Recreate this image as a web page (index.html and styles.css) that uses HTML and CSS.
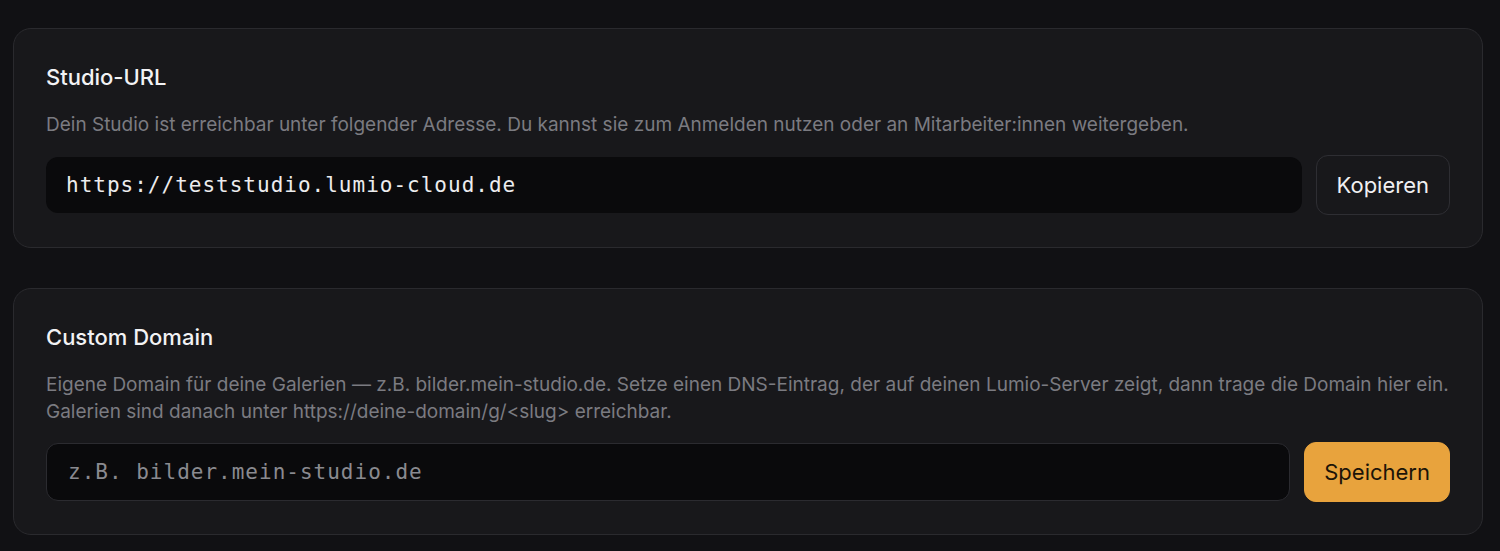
FILE: index.html
```html
<!DOCTYPE html>
<html lang="de">
<head>
<meta charset="utf-8">
<title>Studio-Einstellungen</title>
<link rel="stylesheet" href="styles.css">
</head>
<body>
<main class="page">
  <section class="card">
    <h2 class="card-title">Studio-URL</h2>
    <p class="card-desc">Dein Studio ist erreichbar unter folgender Adresse. Du kannst sie zum Anmelden nutzen oder an Mitarbeiter:innen weitergeben.</p>
    <div class="row">
      <div class="url-box">https://teststudio.lumio-cloud.de</div>
      <button class="btn btn-outline">Kopieren</button>
    </div>
  </section>
  <section class="card">
    <h2 class="card-title">Custom Domain</h2>
    <p class="card-desc">Eigene Domain für deine Galerien — z.B. bilder.mein-studio.de. Setze einen DNS-Eintrag, der auf deinen Lumio-Server zeigt, dann trage die Domain hier ein. Galerien sind danach unter https://deine-domain/g/&lt;slug&gt; erreichbar.</p>
    <div class="row">
      <input class="text-input" type="text" placeholder="z.B. bilder.mein-studio.de">
      <button class="btn btn-primary">Speichern</button>
    </div>
  </section>
</main>
</body>
</html>
```

FILE: styles.css
```css
* { box-sizing: border-box; }
html, body { margin: 0; padding: 0; }
body {
  background: #111114;
  font-family: Inter, "Noto Sans", sans-serif;
  color: #f0f0f2;
}
.page {
  display: flex;
  flex-direction: column;
  gap: 40px;
  padding: 28px 17px 0 13px;
}
.card {
  background: #18181b;
  border: 1px solid #2a2a2e;
  border-radius: 18px;
  padding: 32px;
}
.card-title {
  margin: 0 0 18px;
  font-size: 22px;
  font-weight: 500;
  line-height: 32px;
  color: #f2f2f4;
}
.card-desc {
  margin: 0 0 17px;
  font-size: 19px;
  line-height: 27px;
  color: #7b7b81;
}
.row {
  display: flex;
  align-items: center;
  gap: 14px;
}
.url-box {
  flex: 1;
  height: 56px;
  display: flex;
  align-items: center;
  padding: 0 20px;
  background: #0a0a0c;
  border-radius: 12px;
  font-family: "DejaVu Sans Mono", monospace;
  font-size: 21px;
  letter-spacing: 1px;
  color: #ececee;
}
.text-input {
  flex: 1;
  height: 58px;
  padding: 0 21px;
  background: #0a0a0c;
  border: 1px solid #2b2b30;
  border-radius: 12px;
  font-family: "DejaVu Sans Mono", monospace;
  font-size: 21px;
  letter-spacing: 1px;
  color: #ececee;
  outline: none;
}
.text-input::placeholder { color: #8a8a90; }
.btn {
  height: 60px;
  padding: 0 20px;
  border-radius: 12px;
  font-family: Inter, "Noto Sans", sans-serif;
  font-size: 22px;
  font-weight: 400;
  cursor: pointer;
}
.btn-outline {
  background: #18181b;
  border: 1px solid #2e2e33;
  color: #f0f0f2;
}
.btn-primary {
  padding: 0 19px;
  background: #e8a33d;
  border: 1px solid #e8a33d;
  color: #1c1408;
}
```
